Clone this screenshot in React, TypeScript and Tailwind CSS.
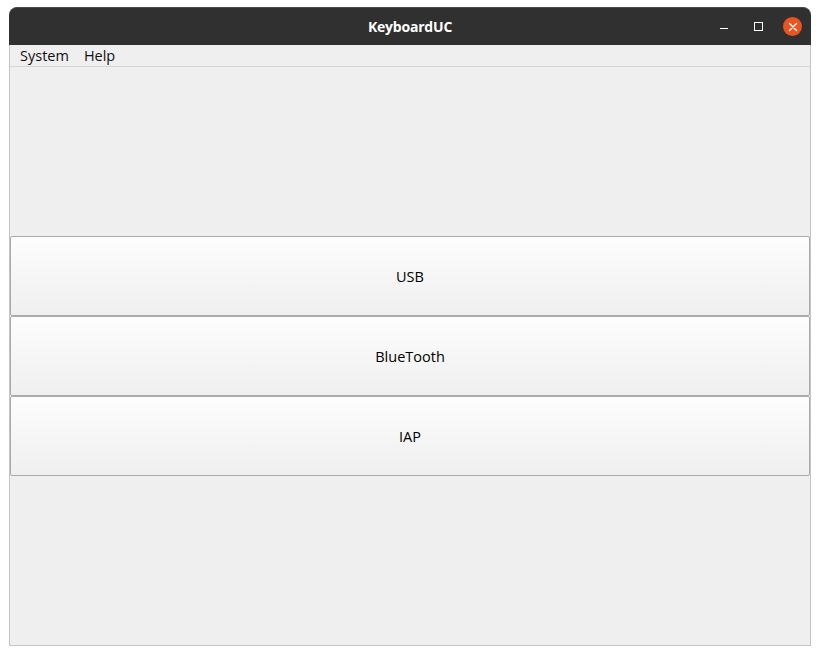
import React from "react";

export default function App() {
  const labels = ["USB", "BlueTooth", "IAP"];

  return (
    <div className="w-[820px] h-[655px] bg-white pt-[7px] pl-[9px]" style={{ fontFamily: '"Open Sans", "Noto Sans", sans-serif' }}>
      <div className="w-[802px] h-[639px] flex flex-col">
        {/* title bar */}
        <div className="h-[38px] bg-[#303030] rounded-t-[8px] border-t border-[#4a4a4a] flex items-center relative">
          <div className="flex-1 text-center text-white font-bold text-[14px] tracking-[-0.2px]">KeyboardUC</div>
          <div className="absolute right-[9px] top-0 h-full flex items-center">
            <div className="w-[8px] h-[1.5px] bg-white mr-[26px] mt-[4px]" />
            <div className="w-[9px] h-[9px] border border-white mr-[20px] mb-[1px]" />
            <div className="w-[19px] h-[19px] rounded-full bg-[#e95420] flex items-center justify-center">
              <svg width="10" height="10" viewBox="0 0 10 10">
                <path d="M1.5 1.5 L8.5 8.5 M8.5 1.5 L1.5 8.5" stroke="white" strokeWidth="1.4" strokeLinecap="round" />
              </svg>
            </div>
          </div>
        </div>

        <div className="flex-1 flex flex-col bg-[#efefef] border-x border-b border-[#c4c4c4]">
          {/* menu bar */}
          <div className="h-[22px] flex items-center gap-[15px] pl-[10px] border-b border-[#d6d6d6] text-[14.5px] text-[#111]">
            <span>System</span>
            <span>Help</span>
          </div>

          {/* buttons */}
          <div className="flex-1 flex flex-col justify-center">
            {labels.map((l) => (
              <div
                key={l}
                className="h-[80px] pt-[2px] flex items-center justify-center rounded-[2px] border border-[#ababab] bg-gradient-to-b from-[#fdfdfd] to-[#efefef] text-[14.5px] text-[#000]"
              >
                {l}
              </div>
            ))}
          </div>
        </div>
      </div>
    </div>
  );
}
